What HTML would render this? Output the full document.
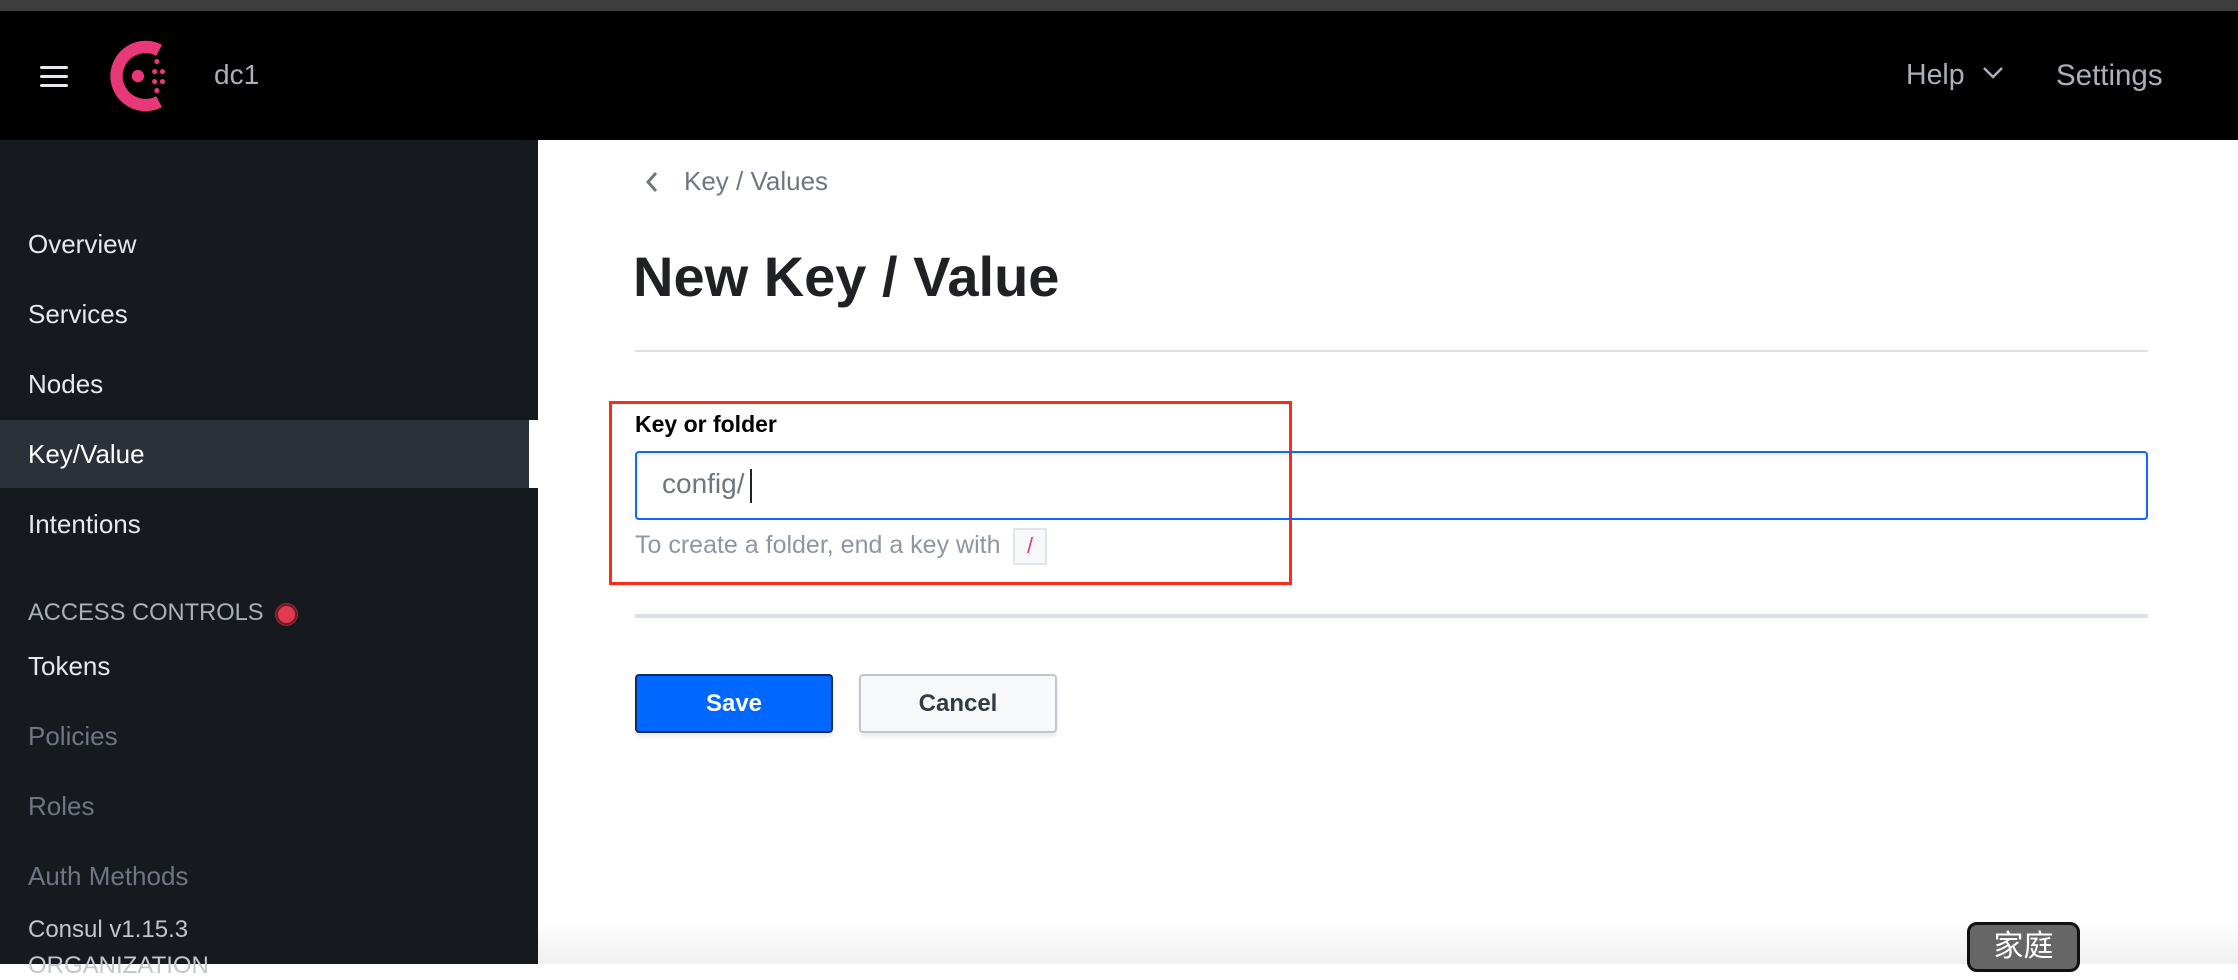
<!DOCTYPE html>
<html><head><meta charset="utf-8"><style>
*{margin:0;padding:0;box-sizing:border-box}
body{width:2238px;height:964px;overflow:hidden;position:relative;background:#fff;font-family:"Liberation Sans","Noto Sans CJK SC",sans-serif}
.a{position:absolute;white-space:nowrap}
</style></head><body>
<div class="a" style="left:0;top:0;width:2238px;height:11px;background:#3d3d3d"></div>
<div class="a" style="left:0;top:11px;width:2238px;height:129px;background:#000"></div>
<div class="a" style="left:40px;top:66px;width:28px;height:3px;background:#e6e8ec;border-radius:2px"></div>
<div class="a" style="left:40px;top:75px;width:28px;height:3px;background:#e6e8ec;border-radius:2px"></div>
<div class="a" style="left:40px;top:84px;width:28px;height:3px;background:#e6e8ec;border-radius:2px"></div>
<svg class="a" style="left:101px;top:40px" width="76" height="72" viewBox="0 0 68 64">
<path d="M52 9 A26 26 0 1 0 52 55" fill="none" stroke="#e9387a" stroke-width="11"/>
<circle cx="33" cy="32" r="5.5" fill="#e9387a"/>
<circle cx="50" cy="19" r="2.3" fill="#e9387a"/><circle cx="50" cy="45" r="2.3" fill="#e9387a"/>
<circle cx="48" cy="28" r="2.3" fill="#e9387a"/><circle cx="55" cy="28" r="2.3" fill="#e9387a"/>
<circle cx="48" cy="37" r="2.3" fill="#e9387a"/><circle cx="55" cy="37" r="2.3" fill="#e9387a"/>
</svg>
<div class="a" style="left:214px;top:59px;font-size:28px;color:#aab0ba">dc1</div>
<div class="a" style="left:1906px;top:59px;font-size:28.5px;color:#aab0ba">Help</div>
<svg class="a" style="left:1982px;top:66px" width="22" height="14"><path d="M2 2 L11 11 L20 2" fill="none" stroke="#aab0ba" stroke-width="2.5"/></svg>
<div class="a" style="left:2056px;top:59px;font-size:29.5px;color:#aab0ba">Settings</div>
<div class="a" style="left:0;top:140px;width:538px;height:824px;background:#16191e"></div>
<div class="a" style="left:0;top:420px;width:529px;height:68px;background:#2c3038"></div>
<div class="a" style="left:529px;top:420px;width:9px;height:68px;background:#fff"></div>
<div class="a" style="left:28px;top:229px;font-size:26px;color:#e6e8ec">Overview</div>
<div class="a" style="left:28px;top:299px;font-size:26px;color:#e6e8ec">Services</div>
<div class="a" style="left:28px;top:369px;font-size:26px;color:#e6e8ec">Nodes</div>
<div class="a" style="left:28px;top:439px;font-size:26px;color:#fff">Key/Value</div>
<div class="a" style="left:28px;top:509px;font-size:26px;color:#e6e8ec">Intentions</div>
<div class="a" style="left:28px;top:600px;font-size:23.7px;color:#aab0ba">ACCESS CONTROLS</div>
<div class="a" style="left:276px;top:604px;width:21px;height:21px;border-radius:50%;background:#e03a4d;border:2px solid #6b1d27;box-shadow:0 0 0 1px #9b2634"></div>
<div class="a" style="left:28px;top:651px;font-size:26px;color:#e6e8ec">Tokens</div>
<div class="a" style="left:28px;top:721px;font-size:26px;color:#6f7682">Policies</div>
<div class="a" style="left:28px;top:791px;font-size:26px;color:#6f7682">Roles</div>
<div class="a" style="left:28px;top:861px;font-size:26px;color:#6f7682">Auth Methods</div>
<div class="a" style="left:28px;top:916px;font-size:24px;color:#c2c5cb">Consul v1.15.3</div>
<div class="a" style="left:28px;top:952px;font-size:24px;color:#c2c5cb">ORGANIZATION</div>
<svg class="a" style="left:644px;top:170px" width="16" height="24"><path d="M12 3 L4 12 L12 21" fill="none" stroke="#6f7682" stroke-width="3"/></svg>
<div class="a" style="left:684px;top:166px;font-size:26px;color:#6f7682">Key / Values</div>
<div class="a" style="left:633px;top:244px;font-size:56px;font-weight:bold;color:#1f2124">New Key / Value</div>
<div class="a" style="left:635px;top:350px;width:1513px;height:2px;background:#dcdfe4"></div>
<div class="a" style="left:609px;top:401px;width:683px;height:184px;border:3px solid #ff2a1a"></div>
<div class="a" style="left:635px;top:411px;font-size:23px;font-weight:bold;color:#000">Key or folder</div>
<div class="a" style="left:635px;top:451px;width:1513px;height:69px;border:2px solid #1563ff;border-radius:4px;box-shadow:inset 0 4px 4px rgba(0,0,0,.05)"></div>
<div class="a" style="left:662px;top:468px;font-size:28px;color:#6f7682">config/</div>
<div class="a" style="left:750px;top:469px;width:2px;height:34px;background:#222"></div>
<div class="a" style="left:635px;top:531px;font-size:25px;color:#8e96a3">To create a folder, end a key with</div>
<div class="a" style="left:1013px;top:528px;width:34px;height:37px;background:#f7f8fa;border:2px solid #e1e4e8;color:#e9387a;font-size:22px;text-align:center;line-height:32px">/</div>
<div class="a" style="left:635px;top:614px;width:1513px;height:4px;background:#dcdfe4"></div>
<div class="a" style="left:635px;top:674px;width:198px;height:59px;background:#0068ff;border:2px solid #0c2a66;border-radius:4px;color:#fff;font-size:24px;font-weight:bold;text-align:center;line-height:55px;box-shadow:0 4px 4px rgba(0,0,0,.08)">Save</div>
<div class="a" style="left:859px;top:674px;width:198px;height:59px;background:#f7f8fa;border:2px solid #c2c5cb;border-radius:4px;color:#343a45;font-size:24px;font-weight:bold;text-align:center;line-height:55px;box-shadow:0 4px 4px rgba(0,0,0,.08)">Cancel</div>
<div class="a" style="left:538px;top:920px;width:1700px;height:44px;background:linear-gradient(#fff,#f0f0f0)"></div>
<div class="a" style="left:1967px;top:922px;width:113px;height:50px;background:#666;border:3px solid #111;border-radius:10px;color:#fff;font-size:30px;text-align:center;line-height:44px">家庭</div>
</body></html>
